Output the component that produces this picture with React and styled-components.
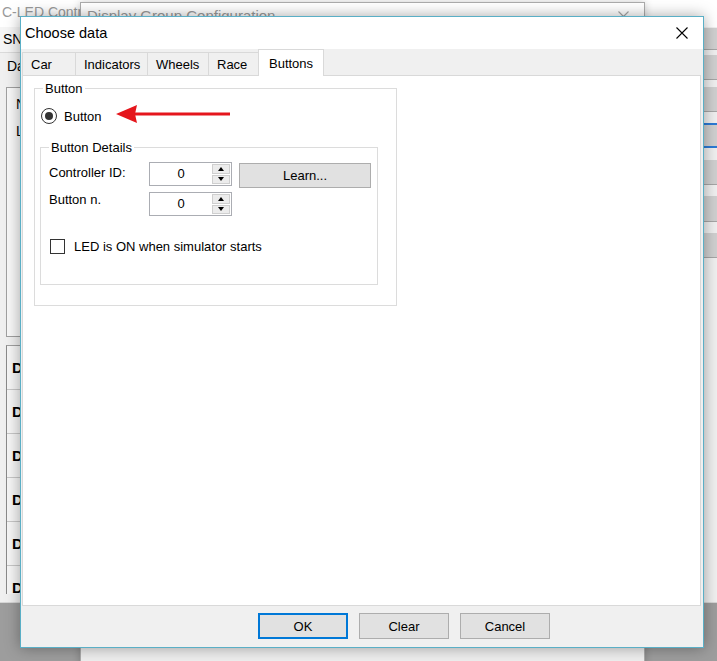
import styled, { createGlobalStyle } from "styled-components";

const tabs = [
  { label: "Car", w: 54 },
  { label: "Indicators", w: 73 },
  { label: "Wheels", w: 62 },
  { label: "Race", w: 51 },
  { label: "Buttons", w: 66, active: true },
];

// right hand buttons of the main window, only their edge shows
const sideButtons = [
  { h: 22, mt: 1 },
  { h: 25, mt: 5 },
  { h: 25, mt: 7 },
  { h: 25, mt: 11, focus: true },
  { h: 25, mt: 12 },
  { h: 26, mt: 11 },
  { h: 25, mt: 11 },
];

const listRows = ["D", "D", "D", "D", "D", "D"];

const CloseIcon = ({ size = 12, color = "#000" }) => (
  <svg width={size} height={size} viewBox={`0 0 ${size} ${size}`}>
    <path d={`M0.5 0.5 L${size - 0.5} ${size - 0.5} M${size - 0.5} 0.5 L0.5 ${size - 0.5}`} stroke={color} strokeWidth="1.1" />
  </svg>
);

const App = () => {
  return (
    <>
      <GlobalStyle />
      <Desktop>
        <MainWindow>
          <MainTitle>C-LED Control</MainTitle>
          <MainBody>
            <LeftPane>
              <SnRow>SN</SnRow>
              <PageTabs>Da</PageTabs>
              <Panel>
                <PanelLabel>N</PanelLabel>
                <PanelLabel>L</PanelLabel>
              </Panel>
              <List>
                {listRows.map((r, i) => (
                  <ListRow key={i}>{r}</ListRow>
                ))}
              </List>
            </LeftPane>
            <RightColumn>
              {sideButtons.map((b, i) => (
                <SideButton key={i} $h={b.h} $mt={b.mt} $focus={b.focus} />
              ))}
            </RightColumn>
          </MainBody>
        </MainWindow>

        <GroupWindow>
          <GroupTitle>
            <span>Display Group Configuration</span>
            <GroupClose>
              <CloseIcon size={11} color="#a6a6a6" />
            </GroupClose>
          </GroupTitle>
        </GroupWindow>

        <Dialog>
          <DialogTitle>
            <span>Choose data</span>
            <CloseIcon size={12} />
          </DialogTitle>

          <TabStrip>
            {tabs.map((t) => (
              <Tab key={t.label} $w={t.w} $active={t.active}>
                {t.label}
              </Tab>
            ))}
          </TabStrip>

          <TabPage>
            <GroupBox $w={363}>
              <Legend>Button</Legend>
              <GroupContent $pt={12} $pb={20} $pl={5}>
                <RadioRow>
                  <Radio />
                  <RadioLabel>Button</RadioLabel>
                  <Arrow width="116" height="20" viewBox="0 0 116 20">
                    <polygon points="0,9 21,0 19,9 21,18" fill="#e5161c" />
                    <rect x="18" y="7.5" width="96" height="3" fill="#e5161c" />
                  </Arrow>
                </RadioRow>

                <GroupBox $w={338} $mt={16}>
                  <Legend>Button Details</Legend>
                  <GroupContent $pt={7} $pb={30} $pl={8}>
                    <FieldGrid>
                      <FieldLabel $mt={3}>Controller ID:</FieldLabel>
                      <Spin>
                        <SpinValue>0</SpinValue>
                        <SpinButtons>
                          <SpinArrow><Up /></SpinArrow>
                          <SpinArrow><Down /></SpinArrow>
                        </SpinButtons>
                      </Spin>
                      <LearnButton>Learn...</LearnButton>

                      <FieldLabel $mt={0}>Button n.</FieldLabel>
                      <Spin>
                        <SpinValue>0</SpinValue>
                        <SpinButtons>
                          <SpinArrow><Up /></SpinArrow>
                          <SpinArrow><Down /></SpinArrow>
                        </SpinButtons>
                      </Spin>
                    </FieldGrid>

                    <CheckRow>
                      <CheckBox />
                      <CheckLabel>LED is ON when simulator starts</CheckLabel>
                    </CheckRow>
                  </GroupContent>
                </GroupBox>
              </GroupContent>
            </GroupBox>
          </TabPage>

          <ButtonBar>
            <DlgButton $default>OK</DlgButton>
            <DlgButton>Clear</DlgButton>
            <DlgButton>Cancel</DlgButton>
          </ButtonBar>
        </Dialog>
      </Desktop>
    </>
  );
};

export default App;

const GlobalStyle = createGlobalStyle`
  html, body {
    margin: 0;
    padding: 0;
  }
  body {
    font-family: "Liberation Sans", Arial, sans-serif;
    font-size: 13px;
    color: #000;
  }
`;

const Desktop = styled.div`
  position: relative;
  width: 717px;
  height: 661px;
  overflow: hidden;
  background: #9d9d9d;
`;

/* ---- main window (back) ---- */
const MainWindow = styled.div`
  position: absolute;
  left: 0;
  top: 0;
  width: 760px;
  height: 603px;
  box-sizing: border-box;
  display: flex;
  flex-direction: column;
  background: #f0f0f0;
  border-bottom: 1px solid #d6d6d6;
`;
const MainTitle = styled.div`
  height: 27px;
  flex: none;
  box-sizing: border-box;
  padding: 3px 0 0 2px;
  background: #fff;
  font-size: 14px;
  line-height: 18px;
  color: #9a9a9a;
  white-space: nowrap;
`;
const MainBody = styled.div`
  flex: 1;
  min-height: 0;
  display: flex;
`;
const LeftPane = styled.div`
  width: 704px;
  flex: none;
  display: flex;
  flex-direction: column;
`;
const SnRow = styled.div`
  height: 25px;
  flex: none;
  padding-left: 3px;
  font-size: 14px;
  line-height: 25px;
  background: #f5f5f5;
  border-bottom: 1px solid #dadada;
`;
const PageTabs = styled.div`
  height: 27px;
  flex: none;
  padding-left: 7px;
  font-size: 14px;
  line-height: 27px;
`;
const Panel = styled.div`
  flex: none;
  height: 250px;
  margin: 7px 0 0 6px;
  box-sizing: border-box;
  padding: 8px 0 0 9px;
  border: 1px solid #a0a0a0;
  background: #f8f8f8;
`;
const PanelLabel = styled.div`
  font-size: 14px;
  line-height: 17px;
  margin-bottom: 10px;
`;
const List = styled.div`
  flex: none;
  height: 248px;
  margin: 8px 0 0 6px;
  overflow: hidden;
  border-left: 1px solid #8a8a8a;
  border-top: 1px solid #a0a0a0;
  background: #f6f6f6;
`;
const ListRow = styled.div`
  height: 44px;
  box-sizing: border-box;
  padding-left: 5px;
  line-height: 43px;
  font-size: 15px;
  font-weight: bold;
  border-bottom: 1px solid #c8c8c8;
`;
const RightColumn = styled.div`
  flex: 1;
  display: flex;
  flex-direction: column;
`;
const SideButton = styled.div`
  flex: none;
  height: ${(p) => p.$h}px;
  margin-top: ${(p) => p.$mt}px;
  box-sizing: border-box;
  background: #d0d0d0;
  border-bottom: 1px solid #a6a6a6;
  border-top: ${(p) => (p.$focus ? "2px solid #2c7bd6" : "none")};
  ${(p) => p.$focus && "border-bottom: 2px solid #2c7bd6;"}
`;

/* ---- display group window (middle) ---- */
const GroupWindow = styled.div`
  position: absolute;
  left: 80px;
  top: 2px;
  width: 565px;
  height: 700px;
  box-sizing: border-box;
  border: 1px solid #ababab;
  background: #eeeeee;
  box-shadow: 0 0 8px rgba(0, 0, 0, 0.2);
`;
const GroupTitle = styled.div`
  height: 30px;
  box-sizing: border-box;
  display: flex;
  justify-content: space-between;
  align-items: flex-start;
  padding: 4px 15px 0 6px;
  background: #fff;
  font-size: 15px;
  line-height: 18px;
  color: #9a9a9a;
`;
const GroupClose = styled.div`
  margin-top: 4px;
  display: flex;
`;

/* ---- choose data dialog (front) ---- */
const Dialog = styled.div`
  position: absolute;
  left: 20px;
  top: 16px;
  width: 684px;
  height: 632px;
  box-sizing: border-box;
  display: flex;
  flex-direction: column;
  border: 1px solid #5aafc6;
  background: #f0f0f0;
  box-shadow: 0 0 14px rgba(0, 0, 0, 0.35);
`;
const DialogTitle = styled.div`
  height: 32px;
  flex: none;
  display: flex;
  align-items: center;
  justify-content: space-between;
  padding: 0 15px 0 4px;
  background: #fff;
  font-size: 14.5px;
`;
const TabStrip = styled.div`
  height: 26px;
  flex: none;
  display: flex;
  align-items: flex-end;
  padding-left: 1px;
`;
const Tab = styled.div`
  position: relative;
  z-index: ${(p) => (p.$active ? 1 : 0)};
  width: ${(p) => p.$w}px;
  height: ${(p) => (p.$active ? 27 : 23)}px;
  margin-bottom: ${(p) => (p.$active ? -1 : 0)}px;
  box-sizing: border-box;
  display: flex;
  align-items: center;
  padding-left: ${(p) => (p.$active ? 10 : 8)}px;
  border: 1px solid #d9d9d9;
  border-bottom: none;
  background: ${(p) => (p.$active ? "#fff" : "#f0f0f0")};
  & + & {
    margin-left: -1px;
  }
`;
const TabPage = styled.div`
  flex: 1;
  min-height: 0;
  margin: 0 2px 0 1px;
  box-sizing: border-box;
  padding: 5px 0 0 11px;
  border: 1px solid #d9d9d9;
  background: #fff;
`;
const GroupBox = styled.fieldset`
  margin: ${(p) => p.$mt || 0}px 0 0 0;
  padding: 0;
  min-width: 0;
  width: ${(p) => p.$w}px;
  box-sizing: border-box;
  border: 1px solid #dcdcdc;
`;
const Legend = styled.legend`
  margin-left: 8px;
  padding: 0 2px;
  line-height: 15px;
`;
const GroupContent = styled.div`
  padding: ${(p) => p.$pt}px 0 ${(p) => p.$pb}px ${(p) => p.$pl}px;
`;
const RadioRow = styled.div`
  display: flex;
  align-items: center;
  height: 16px;
  margin-left: 1px;
`;
const Radio = styled.div`
  width: 16px;
  height: 16px;
  box-sizing: border-box;
  border-radius: 50%;
  border: 1px solid #333;
  background: #fff;
  display: flex;
  align-items: center;
  justify-content: center;
  &::after {
    content: "";
    width: 8px;
    height: 8px;
    border-radius: 50%;
    background: #333;
  }
`;
const RadioLabel = styled.span`
  margin-left: 7px;
`;
const Arrow = styled.svg`
  margin-left: 14px;
  margin-top: -3px;
`;
const FieldGrid = styled.div`
  display: grid;
  grid-template-columns: 92px 83px 131px;
  column-gap: 8px;
  row-gap: 4px;
  align-items: start;
`;
const FieldLabel = styled.div`
  margin-top: ${(p) => p.$mt}px;
  line-height: 16px;
`;
const Spin = styled.div`
  display: flex;
  height: 24px;
  box-sizing: border-box;
  border: 1px solid #abadb3;
  background: #fff;
`;
const SpinValue = styled.div`
  flex: 1;
  text-align: center;
  line-height: 22px;
`;
const SpinButtons = styled.div`
  width: 18px;
  display: flex;
  flex-direction: column;
  gap: 1px;
  margin: 1px 1px 1px 0;
`;
const SpinArrow = styled.div`
  flex: 1;
  display: flex;
  align-items: center;
  justify-content: center;
  box-sizing: border-box;
  border: 1px solid #cfcfcf;
  background: #ececec;
`;
const Up = styled.span`
  width: 0;
  height: 0;
  border-left: 3.5px solid transparent;
  border-right: 3.5px solid transparent;
  border-bottom: 4px solid #000;
`;
const Down = styled.span`
  width: 0;
  height: 0;
  border-left: 3.5px solid transparent;
  border-right: 3.5px solid transparent;
  border-top: 4px solid #000;
`;
const LearnButton = styled.div`
  height: 25px;
  margin: 1px 0 0 -1px;
  box-sizing: border-box;
  display: flex;
  align-items: center;
  justify-content: center;
  border: 1px solid #adadad;
  background: #e1e1e1;
`;
const CheckRow = styled.div`
  display: flex;
  align-items: center;
  height: 15px;
  margin: 23px 0 0 1px;
`;
const CheckBox = styled.div`
  width: 15px;
  height: 15px;
  box-sizing: border-box;
  border: 1px solid #333;
  background: #fff;
`;
const CheckLabel = styled.span`
  margin-left: 9px;
`;
const ButtonBar = styled.div`
  height: 41px;
  flex: none;
  box-sizing: border-box;
  display: flex;
  align-items: flex-start;
  gap: 11px;
  padding: 7px 0 0 237px;
`;
const DlgButton = styled.div`
  width: 90px;
  height: 26px;
  box-sizing: border-box;
  display: flex;
  align-items: center;
  justify-content: center;
  border: ${(p) => (p.$default ? "2px solid #0078d7" : "1px solid #adadad")};
  background: #e1e1e1;
`;
